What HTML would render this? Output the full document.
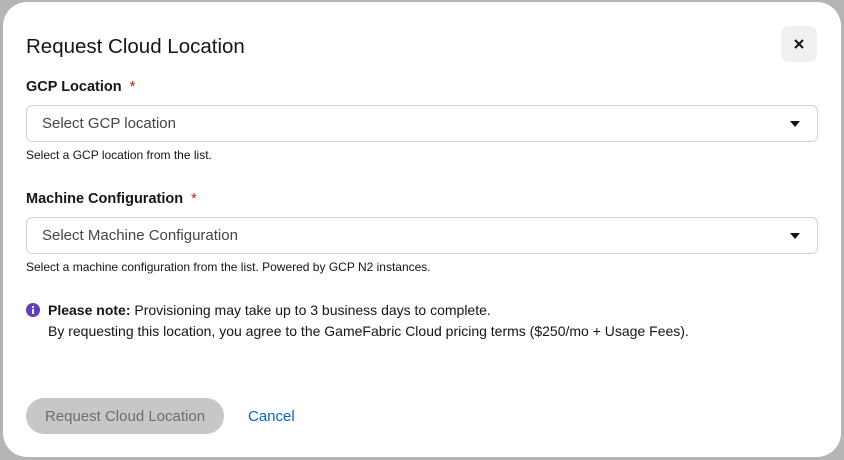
<!DOCTYPE html>
<html><head><style>
body{margin:0;width:844px;height:460px;background:#b5b5b5;font-family:"Liberation Sans",sans-serif;position:relative;overflow:hidden}
.d{position:absolute;left:3px;top:2px;width:838px;height:455px;background:#fff;border-radius:24px}
.a{position:absolute;white-space:nowrap}
.t{left:26px;top:35px;font-size:20.5px;color:#151515}
.x{position:absolute;left:781px;top:26px;width:36px;height:36px;background:#f0f0f0;border-radius:8px}
.lab{left:26px;font-size:14.5px;font-weight:bold;color:#151515}
.lab span{color:#c9190b;margin-left:8px;font-weight:normal}
.sel{position:absolute;left:26px;width:790px;height:35px;border:1px solid #d2d2d2;border-radius:6px}
.sel div{position:absolute;left:15px;top:9px;font-size:15px;color:#444}
.sel i{position:absolute;right:17px;top:15px;width:0;height:0;border-left:5.5px solid transparent;border-right:5.5px solid transparent;border-top:6px solid #151515}
.h{left:26px;font-size:12px;color:#151515}
.n{left:48px;font-size:14px;color:#151515;line-height:21px}
.b{position:absolute;left:26px;top:398px;width:198px;height:36px;border-radius:18px;background:#c7c7c7;color:#6a6e73;font-size:15px;text-align:center;line-height:38px}
</style></head><body>
<div class="d"></div>
<div class="a t">Request Cloud Location</div>
<div class="x"><svg width="36" height="36"><path d="M14 14L22 22M22 14L14 22" stroke="#151515" stroke-width="2"/></svg></div>
<div class="a lab" style="top:79px">GCP Location<span>*</span></div>
<div class="sel" style="top:105px"><div>Select GCP location</div><i></i></div>
<div class="a h" style="top:148px">Select a GCP location from the list.</div>
<div class="a lab" style="top:191px">Machine Configuration<span>*</span></div>
<div class="sel" style="top:217px"><div>Select Machine Configuration</div><i></i></div>
<div class="a h" style="top:260px">Select a machine configuration from the list. Powered by GCP N2 instances.</div>
<svg class="a" style="left:26px;top:303px" width="14" height="14"><circle cx="7" cy="7" r="7" fill="#5e40be"/><rect x="6" y="6" width="2" height="5" fill="#fff"/><circle cx="7" cy="4" r="1.1" fill="#fff"/></svg>
<div class="a n" style="top:300px"><b>Please note:</b> Provisioning may take up to 3 business days to complete.<br>By requesting this location, you agree to the GameFabric Cloud pricing terms ($250/mo + Usage Fees).</div>
<div class="b">Request Cloud Location</div>
<div class="a" style="left:248px;top:408px;font-size:15px;color:#0066cc">Cancel</div>
</body></html>
